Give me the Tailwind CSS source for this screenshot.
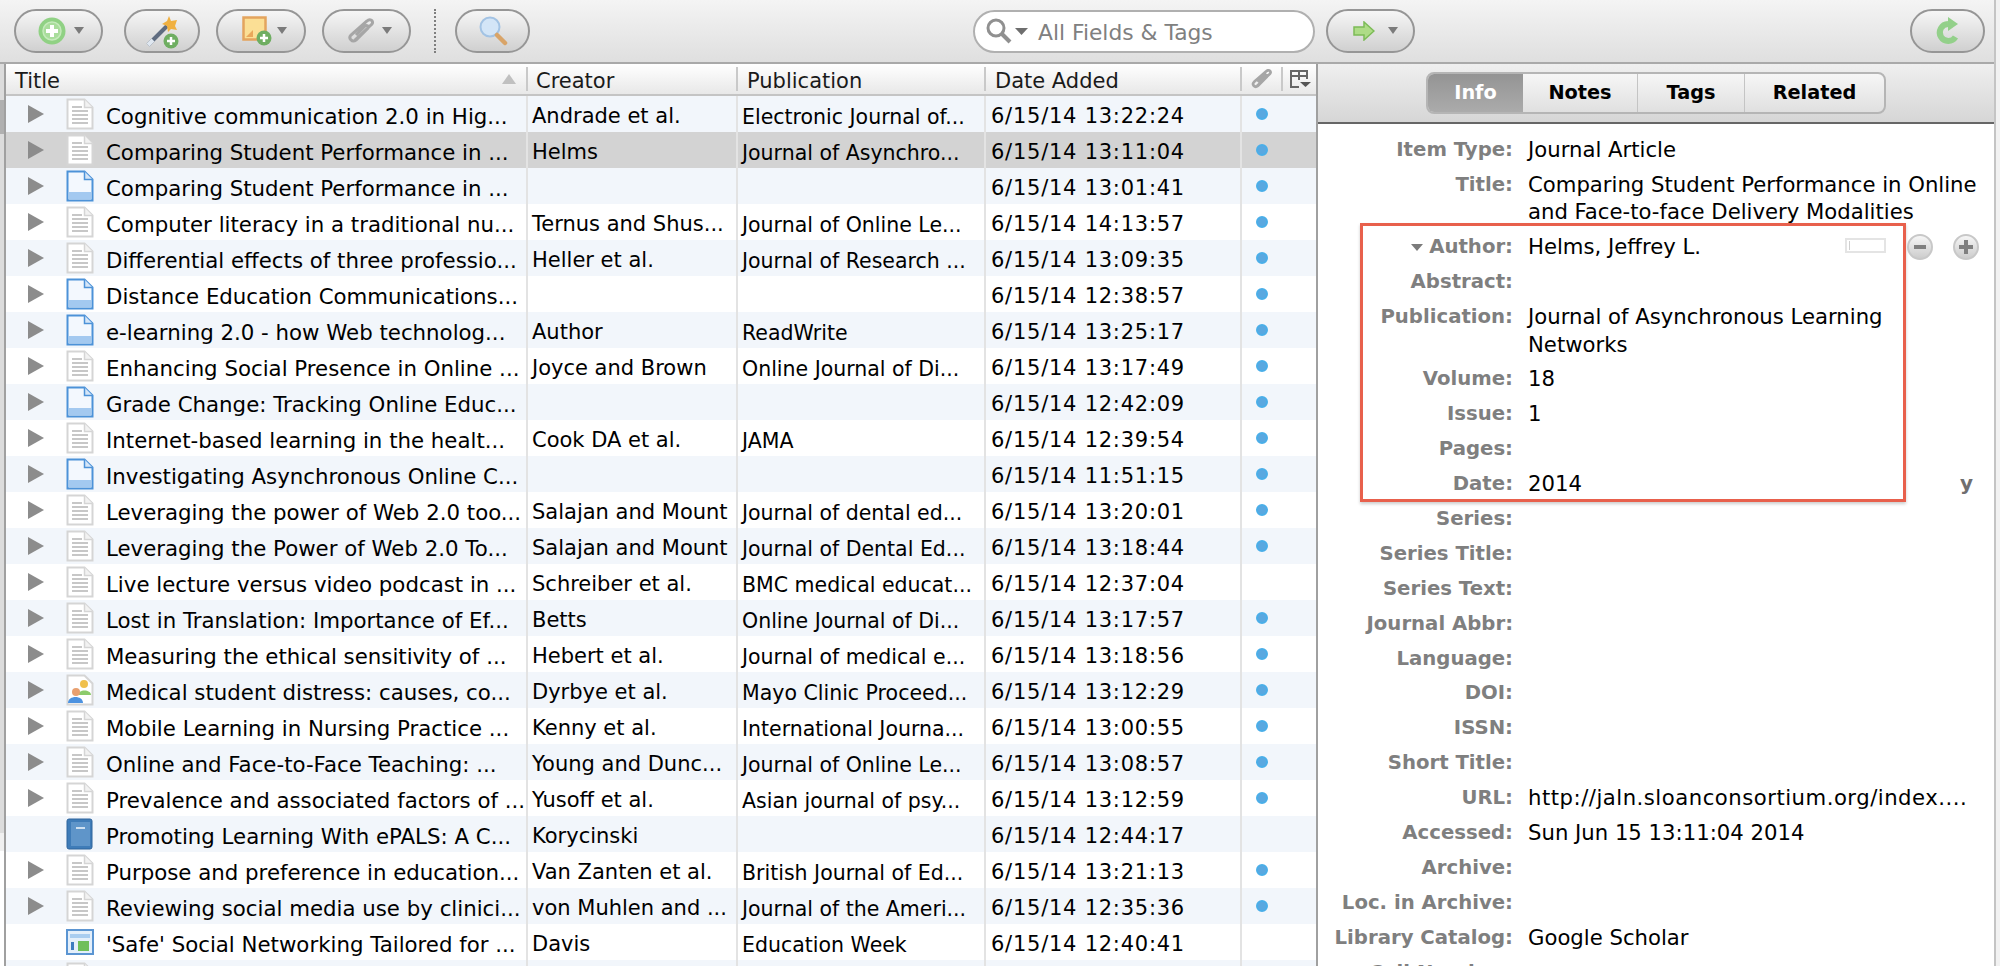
<!doctype html>
<html lang="en">
<head>
  <meta charset="UTF-8" />
  <title>Zotero</title>
  <script src="https://cdn.jsdelivr.net/npm/@tailwindcss/browser@4"></script>
</head>
<body class="w-[2000px] h-[966px] overflow-hidden flex bg-white font-['DejaVu_Sans',sans-serif] text-[21px] text-black">
  <div id="app" class="relative flex flex-col h-full w-[1994px] shrink-0">

    <!-- toolbar -->
    <div class="flex items-center h-[64px] shrink-0 pl-[14px] bg-gradient-to-b from-[#f4f4f4] to-[#dfdfdf] border-b-2 border-[#a9a9a9]">
      <button class="w-[89px] h-[44px] pl-[5px] rounded-full border-2 border-[#969696] bg-gradient-to-b from-[#f6f6f6] to-[#d0d0d0] flex items-center justify-center gap-[8px]">
        <svg width="28" height="28" viewBox="0 0 28 28"><circle cx="14" cy="14" r="13.500" fill="#90d184"/><circle cx="14" cy="14" r="9" fill="#a9dd9c" stroke="#c5eabb" stroke-width="1.500"/><path d="M14 8v12M8 14h12" stroke="#fff" stroke-width="4"/></svg>
        <svg class="mb-[2px]" width="10" height="7" viewBox="0 0 10 7"><path d="M0 0h10L5 7z" fill="#7b7b7b"/></svg>
      </button>
      <button class="ml-[21px] w-[76px] h-[44px] rounded-full border-2 border-[#969696] bg-gradient-to-b from-[#f6f6f6] to-[#d0d0d0] flex items-center justify-center">
        <svg width="34" height="36" viewBox="0 0 34 36"><path d="M3 32 22 13" stroke="#5f6c80" stroke-width="4"/><path d="M3 32 8 27" stroke="#dfe7f0" stroke-width="4"/><path d="M24 3l2 5 6-1-2 6 2 4-6-1-3 3-1-6-5-2 5-3z" fill="#f0b040"/><circle cx="26" cy="28" r="7.500" fill="#6fae62"/><path d="M26 24v8M22 28h8" stroke="#fff" stroke-width="2.500"/></svg>
      </button>
      <button class="ml-[16px] w-[90px] h-[44px] pl-[7px] rounded-full border-2 border-[#969696] bg-gradient-to-b from-[#f6f6f6] to-[#d0d0d0] flex items-center justify-center gap-[5px]">
        <svg width="30" height="30" viewBox="0 0 30 30"><rect x="1.500" y="1.500" width="22" height="22" fill="#fbdf95" stroke="#e3a45e" stroke-width="2.500"/><path d="M4 21l7-7v7z" fill="#e9a75a"/><circle cx="22" cy="22" r="7.500" fill="#6fae62"/><path d="M22 18v8M18 22h8" stroke="#fff" stroke-width="2.500"/></svg>
        <svg class="mb-[2px]" width="10" height="7" viewBox="0 0 10 7"><path d="M0 0h10L5 7z" fill="#7b7b7b"/></svg>
      </button>
      <button class="ml-[16px] w-[89px] h-[44px] pl-[7px] rounded-full border-2 border-[#969696] bg-gradient-to-b from-[#f6f6f6] to-[#d0d0d0] flex items-center justify-center gap-[7px]">
        <svg width="27" height="26" viewBox="0 0 27 26"><path d="M7 22 24 6c2-3-2-6-5-3L3 17c-3 3 1 8 5 5L20 10c1-2-1-3-3-2L8 17" fill="none" stroke="#a6a6a6" stroke-width="3"/></svg>
        <svg class="mb-[2px]" width="10" height="7" viewBox="0 0 10 7"><path d="M0 0h10L5 7z" fill="#7b7b7b"/></svg>
      </button>
      <div class="ml-[23px] h-[44px] border-l-2 border-dotted border-[#7f7f7f]"></div>
      <button class="ml-[19px] w-[75px] h-[44px] rounded-full border-2 border-[#969696] bg-gradient-to-b from-[#f6f6f6] to-[#d0d0d0] flex items-center justify-center">
        <svg width="30" height="30" viewBox="0 0 30 30"><circle cx="12" cy="11" r="9.500" fill="#d3e5f7" stroke="#a3c3e4" stroke-width="2"/><path d="M19 19l8 8" stroke="#d9a468" stroke-width="4.500" stroke-linecap="round"/></svg>
      </button>
      <div class="ml-[443px] w-[342px] h-[43px] rounded-full border-2 border-[#b0b0b0] bg-white flex items-center pl-[11px] text-[21.800px] text-[#808080]">
        <svg width="28" height="28" viewBox="0 0 28 28"><circle cx="10" cy="11" r="8" fill="none" stroke="#909090" stroke-width="3"/><path d="M16 17l8 8" stroke="#909090" stroke-width="4"/></svg>
        <svg class="ml-[1px]" width="13" height="7" viewBox="0 0 13 7"><path d="M0 0h13L6.500 7z" fill="#6e6e6e"/></svg>
        <span class="ml-[10px] pt-[5px]">All Fields &amp; Tags</span>
      </div>
      <button class="ml-[11px] w-[89px] h-[44px] pl-[9px] rounded-full border-2 border-[#969696] bg-gradient-to-b from-[#f6f6f6] to-[#d0d0d0] flex items-center justify-center gap-[13px]">
        <svg width="22" height="20" viewBox="0 0 22 20"><path d="M1 6h10V1l10 9-10 9v-5H1z" fill="#aedc87" stroke="#7cbb57" stroke-width="1.500"/></svg>
        <svg class="mb-[2px]" width="10" height="7" viewBox="0 0 10 7"><path d="M0 0h10L5 7z" fill="#7b7b7b"/></svg>
      </button>
      <button class="ml-[495px] w-[75px] h-[44px] rounded-full border-2 border-[#969696] bg-gradient-to-b from-[#f6f6f6] to-[#d0d0d0] flex items-center justify-center">
        <svg width="26" height="30" viewBox="0 0 26 30"><path d="M20.500 21A8.500 8.500 0 1 1 13 8" fill="none" stroke="#93d08a" stroke-width="6"/><path d="M13 1l10 7-10 7z" fill="#93d08a"/></svg>
      </button>
    </div>

    <div class="flex flex-1 min-h-0">
      <!-- sliver of the collections pane -->
      <div class="w-[4px] shrink-0 flex flex-col">
        <div class="h-[36px] bg-[#dcdcdc]"></div>
        <div class="h-[34px] bg-[#b0b0b0]"></div>
        <div class="h-[699px] bg-[#dcdcdc]"></div>
        <div class="h-[18px] bg-[#f0f0f0]"></div>
      </div>

      <!-- items table -->
      <div class="w-[1314px] shrink-0 flex flex-col border-l-2 border-r-2 border-[#a0a0a0]">
        <div id="header" class="flex items-center h-[32px] shrink-0 bg-gradient-to-b from-white to-[#e8e8e8] border-b-2 border-[#c4c4c4] text-[#1a1a1a]">
          <div class="w-[522px] shrink-0 flex items-center justify-between pl-[9px] pr-[10px] border-r-2 border-[#c9c9c9] h-[24px]"><span class="pt-[6px]">Title</span><svg width="14" height="10" viewBox="0 0 14 10"><path d="M7 0l7 10H0z" fill="#c0c0c0"/></svg></div>
          <div class="w-[210px] shrink-0 flex items-center pl-[8px] border-r-2 border-[#c9c9c9] h-[24px]"><span class="pt-[6px]">Creator</span></div>
          <div class="w-[248px] shrink-0 flex items-center pl-[9px] border-r-2 border-[#c9c9c9] h-[24px]"><span class="pt-[6px]">Publication</span></div>
          <div class="w-[256px] shrink-0 flex items-center pl-[9px] border-r-2 border-[#c9c9c9] h-[24px]"><span class="pt-[6px]">Date Added</span></div>
          <div class="w-[41px] shrink-0 flex justify-center items-center border-r-2 border-[#c9c9c9] h-[24px]"><svg width="22" height="20" viewBox="0 0 27 26"><path d="M7 22 24 6c2-3-2-6-5-3L3 17c-3 3 1 8 5 5L20 10c1-2-1-3-3-2L8 17" fill="none" stroke="#a6a6a6" stroke-width="3.500"/></svg></div>
          <div class="flex-1 flex justify-center"><svg width="22" height="20" viewBox="0 0 22 20"><path d="M2 13V2h16v8M2 7h16M10 2v9M2 13v5h8" fill="none" stroke="#666" stroke-width="2"/><path d="M11 13h11l-5.500 5z" fill="#555"/></svg></div>
        </div>
        <div id="rows" class="flex-1 overflow-hidden"></div>
      </div>

      <!-- info pane -->
      <div class="flex-1 flex flex-col min-w-0">
        <div class="h-[60px] shrink-0 flex items-center bg-gradient-to-b from-[#efefef] to-[#d6d6d6] border-b-2 border-[#666] pl-[108px]">
          <div class="flex items-stretch w-[460px] h-[42px] rounded-[8px] border-2 border-[#b5b5b5] bg-gradient-to-b from-[#f6f6f6] to-[#e0e0e0] font-bold text-[19.300px]">
            <div class="w-[95px] rounded-l-[6px] flex items-center justify-center text-white bg-gradient-to-b from-[#949494] to-[#ababab]">Info</div>
            <div class="w-[115px] flex items-center justify-center border-r border-[#c4c4c4]">Notes</div>
            <div class="w-[107px] flex items-center justify-center border-r border-[#c4c4c4]">Tags</div>
            <div class="flex-1 flex items-center justify-center">Related</div>
          </div>
        </div>
        <div id="fields" class="flex-1 overflow-hidden pt-[12px]"></div>
      </div>
    </div>

    <!-- annotation over the author fields -->
    <div class="absolute left-[1360px] top-[223px] w-[546px] h-[279px] border-[3px] border-[#e8604c] shadow-[0_2px_3px_rgba(0,0,0,0.2)]"></div>
    <div class="absolute left-[1845px] top-[238px] w-[41px] h-[15px] border-2 border-[#e4e4e4] bg-white pl-[2px] pt-[1px]"><div class="w-[1px] h-[9px] bg-[#cfcfcf]"></div></div>
    <div class="absolute left-[1907px] top-[234px] w-[26px] h-[26px] rounded-full border-2 border-[#c8c8c8] bg-gradient-to-b from-[#f6f6f6] to-[#cdcdcd] flex items-center justify-center"><div class="w-[12px] h-[4px] bg-[#808080]"></div></div>
    <div class="absolute left-[1953px] top-[234px] w-[26px] h-[26px] rounded-full border-2 border-[#c8c8c8] bg-gradient-to-b from-[#f6f6f6] to-[#cdcdcd] flex items-center justify-center"><svg width="14" height="14" viewBox="0 0 14 14"><path d="M7 0v14M0 7h14" stroke="#808080" stroke-width="4"/></svg></div>
    <div class="absolute left-[1960px] top-[468px] font-bold text-[20px] text-[#6f6f6f]">y</div>
  </div>
  <div class="flex-1 bg-[#f2f2f2] border-l-2 border-[#c4c4c4]"></div>

  <script>
    var doc = '<svg width="28" height="32" viewBox="0 0 28 32"><path d="M1.500 1.500h17l8 8v21h-25z" fill="#fff" stroke="#d5d5d5" stroke-width="2"/><path d="M18.500 1.500v8h8" fill="#f2f2f2" stroke="#d5d5d5" stroke-width="1.500"/><path d="M6 9h10M6 13h16M6 17h16M6 21h16M6 25h16" stroke="#b5b5b5" stroke-width="1.500"/></svg>';
    var page = '<svg width="28" height="32" viewBox="0 0 28 32"><path d="M1.500 1.500h17l8 8v21h-25z" fill="#f3f8fe" stroke="#4c92d8" stroke-width="2"/><path d="M18.500 1.500v8h8" fill="#d5e6f8" stroke="#4c92d8" stroke-width="1.500"/><rect x="3" y="22" width="22" height="7" fill="#a3c9f0"/></svg>';
    var people = '<svg width="28" height="32" viewBox="0 0 28 32"><path d="M1.500 1.500h17l8 8v21h-25z" fill="#fff" stroke="#d5d5d5" stroke-width="2"/><circle cx="18" cy="10" r="4" fill="#f0c04c"/><path d="M12 21c0-6 13-6 13 0z" fill="#8ccb6c"/><circle cx="10" cy="18" r="4" fill="#e8a070"/><path d="M2 29c0-8 15-8 15 0z" fill="#4c92e0"/></svg>';
    var book = '<svg width="28" height="32" viewBox="0 0 28 32"><rect x="1" y="1" width="25" height="30" rx="2" fill="#3f7cb8" stroke="#2f649c"/><rect x="5" y="4" width="19" height="24" fill="#5f95c9"/><rect x="10" y="9" width="9" height="2" fill="#cfe0f0"/></svg>';
    var web = '<svg width="28" height="32" viewBox="0 0 28 32"><rect x="1" y="4" width="26" height="24" fill="#e4effa" stroke="#5b95d2" stroke-width="2"/><rect x="4" y="8" width="20" height="4" fill="#a9cdf0"/><rect x="5" y="16" width="3" height="8" fill="#3c7cc0"/><rect x="12" y="15" width="11" height="10" fill="#6fbf5a"/></svg>';

    var items = [
      [1, doc, "Cognitive communication 2.0 in Hig...", "Andrade et al.", "Electronic Journal of...", "6/15/14 13:22:24", 1],
      [1, doc, "Comparing Student Performance in ...", "Helms", "Journal of Asynchro...", "6/15/14 13:11:04", 1],
      [1, page, "Comparing Student Performance in ...", "", "", "6/15/14 13:01:41", 1],
      [1, doc, "Computer literacy in a traditional nu...", "Ternus and Shus...", "Journal of Online Le...", "6/15/14 14:13:57", 1],
      [1, doc, "Differential effects of three professio...", "Heller et al.", "Journal of Research ...", "6/15/14 13:09:35", 1],
      [1, page, "Distance Education Communications...", "", "", "6/15/14 12:38:57", 1],
      [1, page, "e-learning 2.0 - how Web technolog...", "Author", "ReadWrite", "6/15/14 13:25:17", 1],
      [1, doc, "Enhancing Social Presence in Online ...", "Joyce and Brown", "Online Journal of Di...", "6/15/14 13:17:49", 1],
      [1, page, "Grade Change: Tracking Online Educ...", "", "", "6/15/14 12:42:09", 1],
      [1, doc, "Internet-based learning in the healt...", "Cook DA et al.", "JAMA", "6/15/14 12:39:54", 1],
      [1, page, "Investigating Asynchronous Online C...", "", "", "6/15/14 11:51:15", 1],
      [1, doc, "Leveraging the power of Web 2.0 too...", "Salajan and Mount", "Journal of dental ed...", "6/15/14 13:20:01", 1],
      [1, doc, "Leveraging the Power of Web 2.0 To...", "Salajan and Mount", "Journal of Dental Ed...", "6/15/14 13:18:44", 1],
      [1, doc, "Live lecture versus video podcast in ...", "Schreiber et al.", "BMC medical educat...", "6/15/14 12:37:04", 0],
      [1, doc, "Lost in Translation: Importance of Ef...", "Betts", "Online Journal of Di...", "6/15/14 13:17:57", 1],
      [1, doc, "Measuring the ethical sensitivity of ...", "Hebert et al.", "Journal of medical e...", "6/15/14 13:18:56", 1],
      [1, people, "Medical student distress: causes, co...", "Dyrbye et al.", "Mayo Clinic Proceed...", "6/15/14 13:12:29", 1],
      [1, doc, "Mobile Learning in Nursing Practice ...", "Kenny et al.", "International Journa...", "6/15/14 13:00:55", 1],
      [1, doc, "Online and Face-to-Face Teaching: ...", "Young and Dunc...", "Journal of Online Le...", "6/15/14 13:08:57", 1],
      [1, doc, "Prevalence and associated factors of ...", "Yusoff et al.", "Asian journal of psy...", "6/15/14 13:12:59", 1],
      [0, book, "Promoting Learning With ePALS: A C...", "Korycinski", "", "6/15/14 12:44:17", 0],
      [1, doc, "Purpose and preference in education...", "Van Zanten et al.", "British Journal of Ed...", "6/15/14 13:21:13", 1],
      [1, doc, "Reviewing social media use by clinici...", "von Muhlen and ...", "Journal of the Ameri...", "6/15/14 12:35:36", 1],
      [0, web, "'Safe' Social Networking Tailored for ...", "Davis", "Education Week", "6/15/14 12:40:41", 0],
      [0, doc, "", "", "", "", 0]
    ];

    var rowsHtml = "";
    items.forEach(function (it, i) {
      var bg = i === 1 ? "bg-[#d3d3d3]" : (i % 2 === 0 ? "bg-[#f2f6fb]" : "bg-white");
      var arrow = it[0] ? '<svg width="16" height="18" viewBox="0 0 16 18"><path d="M0 0l16 9L0 18z" fill="#8c8c8c"/></svg>' : '';
      rowsHtml += '<div class="flex items-center h-[36px] whitespace-nowrap overflow-hidden ' + bg + '">' +
        '<div class="w-[522px] shrink-0 h-full flex items-center border-r-2 border-[#e3e3e3]"><div class="w-[60px] pl-[22px] shrink-0">' + arrow + '</div><div class="w-[40px] shrink-0 flex">' + it[1] + '</div><span class="pt-[6px] text-[21.300px]">' + it[2] + '</span></div>' +
        '<div class="w-[210px] shrink-0 h-full flex items-center pl-[4px] border-r-2 border-[#e3e3e3]"><span class="pt-[6px]">' + it[3] + '</span></div>' +
        '<div class="w-[248px] shrink-0 h-full flex items-center pl-[4px] border-r-2 border-[#e3e3e3]"><span class="pt-[6px] text-[20.500px]">' + it[4] + '</span></div>' +
        '<div class="w-[256px] shrink-0 h-full flex items-center pl-[5px] border-r-2 border-[#e3e3e3] tracking-[0.75px]"><span class="pt-[6px]">' + it[5] + '</span></div>' +
        '<div class="flex-1 h-full flex items-center pl-[14px]">' + (it[6] ? '<div class="w-[12px] h-[12px] rounded-full bg-[#5aa8e0] border-2 border-[#4aaee8]"></div>' : '') + '</div>' +
      '</div>';
    });
    document.getElementById("rows").innerHTML = rowsHtml;

    var fields = [
      ["Item Type", ["Journal Article"]],
      ["Title", ["Comparing Student Performance in Online", "and Face-to-face Delivery Modalities"]],
      ["Author", ["Helms, Jeffrey L."], 1],
      ["Abstract", [""]],
      ["Publication", ["Journal of Asynchronous Learning", "Networks"]],
      ["Volume", ["18"]],
      ["Issue", ["1"]],
      ["Pages", [""]],
      ["Date", ["2014"]],
      ["Series", [""]],
      ["Series Title", [""]],
      ["Series Text", [""]],
      ["Journal Abbr", [""]],
      ["Language", [""]],
      ["DOI", [""]],
      ["ISSN", [""]],
      ["Short Title", [""]],
      ["URL", ["http://jaln.sloanconsortium.org/index...."]],
      ["Accessed", ["Sun Jun 15 13:11:04 2014"]],
      ["Archive", [""]],
      ["Loc. in Archive", [""]],
      ["Library Catalog", ["Google Scholar"]],
      ["Call Number", [""]]
    ];

    var fieldsHtml = "";
    fields.forEach(function (f) {
      var lines = f[1].map(function (l) {
        var wide = l.indexOf("http") === 0 ? " tracking-[0.5px]" : "";
        return '<div class="h-[27.500px] leading-[27.500px]' + wide + '">' + l + '</div>';
      }).join("");
      var caret = f[2] ? '<svg class="mr-[6px]" width="12" height="7" viewBox="0 0 12 7"><path d="M0 0h12L6 7z" fill="#7b7b7b"/></svg>' : '';
      fieldsHtml += '<div class="flex mb-[7.400px] whitespace-nowrap">' +
        '<div class="w-[195px] shrink-0 h-[27.500px] flex items-center justify-end font-bold text-[19.700px] text-[#7f7f7f]">' + caret + f[0] + ':</div>' +
        '<div class="pl-[15px] text-[21.200px]">' + lines + '</div>' +
      '</div>';
    });
    document.getElementById("fields").innerHTML = fieldsHtml;
  </script>
</body>
</html>
